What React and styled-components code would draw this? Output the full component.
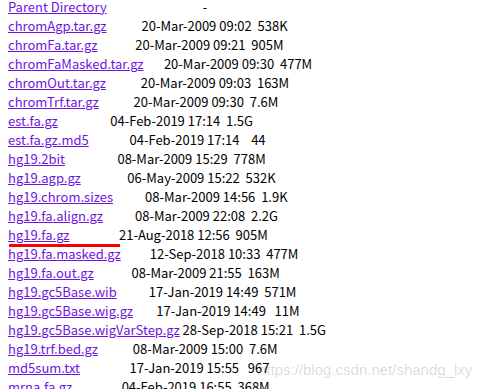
import styled, { createGlobalStyle } from "styled-components";

const GlobalStyle = createGlobalStyle`
    html, body {
        margin: 0;
        background: #fff;
        overflow: hidden;
    }
`;

const files = [
    { name: "chromAgp.tar.gz", date: "20-Mar-2009 09:02", size: "538K" },
    { name: "chromFa.tar.gz", date: "20-Mar-2009 09:21", size: "905M" },
    { name: "chromFaMasked.tar.gz", date: "20-Mar-2009 09:30", size: "477M" },
    { name: "chromOut.tar.gz", date: "20-Mar-2009 09:03", size: "163M" },
    { name: "chromTrf.tar.gz", date: "20-Mar-2009 09:30", size: "7.6M" },
    { name: "est.fa.gz", date: "04-Feb-2019 17:14", size: "1.5G" },
    { name: "est.fa.gz.md5", date: "04-Feb-2019 17:14", size: "44" },
    { name: "hg19.2bit", date: "08-Mar-2009 15:29", size: "778M" },
    { name: "hg19.agp.gz", date: "06-May-2009 15:22", size: "532K" },
    { name: "hg19.chrom.sizes", date: "08-Mar-2009 14:56", size: "1.9K" },
    { name: "hg19.fa.align.gz", date: "08-Mar-2009 22:08", size: "2.2G" },
    { name: "hg19.fa.gz", date: "21-Aug-2018 12:56", size: "905M", marked: true },
    { name: "hg19.fa.masked.gz", date: "12-Sep-2018 10:33", size: "477M" },
    { name: "hg19.fa.out.gz", date: "08-Mar-2009 21:55", size: "163M" },
    { name: "hg19.gc5Base.wib", date: "17-Jan-2019 14:49", size: "571M" },
    { name: "hg19.gc5Base.wig.gz", date: "17-Jan-2019 14:49", size: "11M" },
    { name: "hg19.gc5Base.wigVarStep.gz", date: "28-Sep-2018 15:21", size: "1.5G" },
    { name: "hg19.trf.bed.gz", date: "08-Mar-2009 15:00", size: "7.6M" },
    { name: "md5sum.txt", date: "17-Jan-2019 15:55", size: "967" },
    { name: "mrna.fa.gz", date: "04-Feb-2019 16:55", size: "368M" },
];

// apache pads the name column out to the longest name with spaces
const NAME_WIDTH = 26;

const Page = styled.div`
    position: relative;
    height: 389px;
    padding-left: 8px;
    overflow: hidden;
`;

const Listing = styled.div`
    margin-top: -3px;
    font-family: "Noto Sans CJK SC", "Noto Sans", sans-serif;
    font-size: 13px;
    line-height: 19px;
    color: #000;
`;

const Row = styled.div`
    position: relative;
    white-space: pre;

    &::after {
        content: "";
        display: ${(p) => (p.$marked ? "block" : "none")};
        position: absolute;
        left: 1px;
        top: 19px;
        width: 111px;
        height: 3px;
        background: #f00;
    }
`;

const FileLink = styled.a`
    color: #6f14e0;
    text-decoration: underline;
`;

const Watermark = styled.div`
    position: absolute;
    left: 258px;
    top: 361px;
    font-family: "Liberation Sans", Arial, sans-serif;
    font-size: 15px;
    line-height: 17px;
    color: rgba(0, 0, 0, 0.16);
    white-space: nowrap;
`;

const pad = (name) => " ".repeat(NAME_WIDTH - name.length + 1);

const App = () => {
    return (
        <Page>
            <GlobalStyle />
            <Listing>
                <Row>
                    <FileLink href="#">Parent Directory</FileLink>
                    {pad("Parent Directory") + " ".repeat(17) + "     -"}
                </Row>
                {files.map((f) => (
                    <Row key={f.name} $marked={f.marked}>
                        <FileLink href="#">{f.name}</FileLink>
                        {pad(f.name) + f.date + "  " + f.size.padStart(4, " ")}
                    </Row>
                ))}
            </Listing>
            <Watermark>https://blog.csdn.net/shandg_lxy</Watermark>
        </Page>
    );
};

export default App;
